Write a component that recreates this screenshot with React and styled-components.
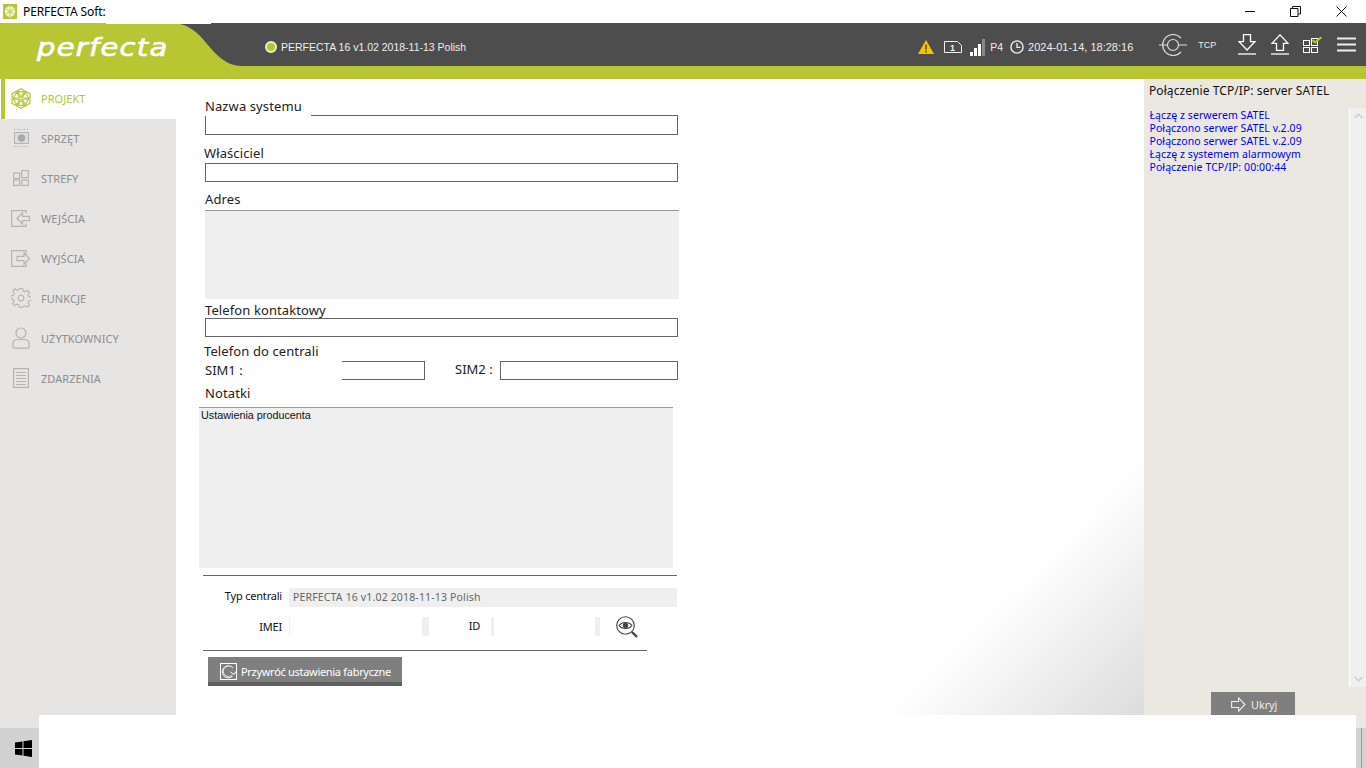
import React from 'react';
import styled, { createGlobalStyle } from 'styled-components';

const Global = createGlobalStyle`
  html, body { margin: 0; padding: 0; background: #fff; overflow: hidden; }
  * { box-sizing: border-box; }
`;
const GREEN = '#b7c632';
const DARK = '#4d4d4d';
const SIDE = '#e6e5e3';
const BEIGE = '#ebe8e1';
const UI = '"Noto Sans", "Open Sans", sans-serif';
const ARIAL = '"Liberation Sans", Arial, sans-serif';

const Page = styled.div`width:1366px;height:768px;display:flex;flex-direction:column;overflow:hidden;font-family:${UI};`;
const TitleBar = styled.div`height:23px;display:flex;align-items:center;position:relative;background:#fff;padding-left:3px;
  &::after{content:"";position:absolute;left:106px;top:23px;width:105px;height:1px;background:#fff;z-index:2;}`;
const AppTitle = styled.span`font-size:12px;color:#000;margin-left:6px;letter-spacing:-.1px;`;
const WinButtons = styled.div`margin-left:auto;display:flex;align-items:center;padding-right:19px;`;
const WinBtn = styled.svg`width:11px;height:11px;margin-left:${p => p.$gap}px;display:block;`;

const Header = styled.header`height:43px;background:${DARK};display:flex;align-items:stretch;color:#fff;font-family:${ARIAL};`;
const Brand = styled.div`width:172px;background:${GREEN};display:flex;align-items:center;padding:5px 0 0 37px;`;
const Logo = styled.span`font:italic 400 25px "DejaVu Sans",sans-serif;-webkit-text-stroke:.7px #fff;color:#fff;letter-spacing:1.1px;line-height:1;display:inline-block;transform:scaleX(1.16);transform-origin:left center;`;
const Curve = styled.svg`width:70px;height:43px;display:block;flex:none;`;
const Strip = styled.div`display:flex;align-items:center;flex:1;`;
const StatusGroup = styled.div`display:flex;align-items:center;padding-top:5px;`;
const ToolGroup = styled.div`display:flex;align-items:center;`;
const Dot = styled.span`width:12px;height:12px;border-radius:50%;background:${GREEN};border:2px solid #e9ecd0;margin-left:23px;flex:none;`;
const HeadText = styled.span`font-size:${p => p.$size || 11}px;color:#eee;margin-left:${p => p.$gap || 0}px;white-space:nowrap;`;
const HeadIcon = styled.svg`display:block;flex:none;margin-left:${p => p.$gap || 0}px;`;
const Stripe = styled.div`height:13px;background:${GREEN};`;

const Body = styled.div`height:636px;display:flex;`;
const Sidebar = styled.nav`width:176px;background:${SIDE};flex:none;`;
const NavItem = styled.div`height:40px;display:flex;align-items:center;background:${p => p.$active ? '#fff' : 'transparent'};
  color:${p => p.$active ? GREEN : '#8d8d8d'};font-size:11px;padding-left:${p => p.$active ? 0 : 5}px;padding-bottom:2px;letter-spacing:.05px;`;
const NavBar = styled.span`width:5px;height:40px;flex:none;border-left:1px solid #fff;background:${GREEN};margin-bottom:-2px;`;
const NavIconBox = styled.span`width:36px;display:flex;justify-content:center;flex:none;padding-right:5px;padding-left:1px;`;

const Main = styled.main`flex:1;padding:19px 0 0 29px;background:#fff linear-gradient(135deg,#fff 50%,#dcdcdc 100%) no-repeat right bottom / 260px 260px;`;
const Form = styled.div`width:474px;display:flex;flex-direction:column;`;
const Label = styled.label`font-size:13px;line-height:17px;height:17px;color:#222;letter-spacing:.1px;margin-top:${p => p.$top || 0}px;margin-left:${p => p.$left || 0}px;white-space:nowrap;`;
const NameLabel = styled(Label)`width:106px;height:18px;background:#fff;position:relative;z-index:1;margin-bottom:-1px;`;
const Input = styled.div`height:${p => p.$h || 19}px;width:473px;background:#fff;border:1.5px solid #666;margin-top:${p => p.$top || 0}px;`;
const Area = styled.div`height:${p => p.$h}px;width:474px;background:#efefef;border-top:1px solid #999;margin-top:${p => p.$top || 0}px;margin-left:${p => p.$left || 0}px;
  font:10.8px/14px "Liberation Sans",Arial,sans-serif;color:#111;padding:0 2px;`;
const SimRow = styled.div`display:flex;align-items:center;height:19px;margin-top:1px;font-size:13px;color:#222;`;
const SimLabel = styled.span`width:${p => p.$w}px;flex:none;margin-left:${p => p.$left || 0}px;margin-top:-${p => p.$up}px;`;
const SimInput = styled.div`height:19px;width:${p => p.$w}px;border:1.5px solid #666;${p => p.$open && 'border-left:0;'}`;
const Rule = styled.div`height:1px;background:#666;width:${p => p.$w}px;margin-left:-2px;margin-top:${p => p.$top}px;`;
const InfoRow = styled.div`display:flex;align-items:center;height:${p => p.$h}px;margin-top:${p => p.$top}px;margin-left:-2px;`;
const InfoLabel = styled.span`font-size:11px;color:#111;width:${p => p.$w}px;text-align:right;flex:none;letter-spacing:-.2px;margin-top:-${p => p.$up || 0}px;`;
const TypeValue = styled.div`margin-left:7px;width:388px;height:19px;background:#efefef;color:#666;font-size:10.5px;line-height:19px;padding-left:4px;letter-spacing:.16px;white-space:nowrap;`;
const Sliver = styled.div`width:${p => p.$w}px;height:19px;flex:none;background:#efefef;margin-left:${p => p.$gap}px;`;
const ResetBtn = styled.button`margin:6px 0 0 3px;width:194px;height:29px;background:#7f7f7f;border:0;border-bottom:4px solid #5f5f5f;color:#fff;
  font:11px ${UI};display:flex;align-items:center;padding:3px 0 0 12px;letter-spacing:-.3px;white-space:nowrap;`;

const Panel = styled.aside`width:222px;flex:none;background:${BEIGE};display:flex;flex-direction:column;`;
const PanelTitle = styled.div`height:29px;font-size:12px;color:#111;padding:4px 0 0 5px;line-height:16px;letter-spacing:.08px;white-space:nowrap;`;
const LogRow = styled.div`height:579px;display:flex;`;
const Log = styled.div`flex:1;padding:1px 0 0 5.5px;font-size:10.5px;line-height:13px;color:#0000f0;letter-spacing:.08px;white-space:nowrap;`;
const Scroll = styled.div`width:17px;border-left:1px solid #fff;background:#f0f0f0;display:flex;flex-direction:column;justify-content:space-between;align-items:center;padding:5px 0 5px;`;
const Hide = styled.button`margin:5px 0 0 67px;width:84px;height:23px;background:#7f7f7f;border:0;color:#eee;font:10.8px ${UI};display:flex;align-items:center;padding:2px 0 0 20px;`;

const Bottom = styled.div`flex:1;display:flex;`;
const Corner = styled.div`width:${p => p.$w}px;flex:none;display:flex;flex-direction:column;`;
const CornerTop = styled.div`height:13px;background:${p => p.$bg};`;
const CornerFill = styled.div`flex:1;background:#d2d2d2;display:flex;align-items:center;justify-content:${p => p.$line ? 'flex-start' : 'center'};padding-left:${p => p.$line ? 5 : 8}px;`;
const Line = styled.span`width:1px;height:100%;background:#999;`;
const Blank = styled.div`flex:1;background:#fff;`;

const ico = { fill: 'none', stroke: '#b4b4b4', strokeWidth: 1.2 };

function Flake({ c = GREEN, w = 1.2, size = 20 }) {
  const sectors = [0, 60, 120, 180, 240, 300];
  return (
    <svg width={size} height={size + 1} viewBox="0 0 20 21" style={{ display: 'block' }}>
      <polygon points="10,.7 18.9,5.7 18.9,15.3 10,20.3 1.1,15.3 1.1,5.7" fill="none" stroke={c} strokeWidth={w} />
      {sectors.map(a => (
        <g key={a} transform={`rotate(${a} 10 10.5)`}>
          <polygon points="10,9 6.6,3.6 13.4,3.6" fill="none" stroke={c} strokeWidth={w} />
        </g>
      ))}
    </svg>
  );
}

const navIcons = {
  chip: (
    <svg width="19" height="20" viewBox="0 0 19 20">
      <rect x="2.5" y="4.5" width="14" height="11" fill="#ddd" stroke="#b4b4b4" />
      <circle cx="9.5" cy="10" r="3.7" fill="#a9a9a9" />
      <path d="M2 1.5h15M2 18.5h15" stroke="#aaa" strokeWidth="1.2" strokeDasharray="1.2 2" />
    </svg>
  ),
  zones: (
    <svg width="16" height="16" viewBox="0 0 16 16" {...ico}>
      <rect x=".6" y="3" width="6" height="5.5" /><rect x="8.8" y=".6" width="6.5" height="7" />
      <rect x=".6" y="10" width="6" height="5.4" /><rect x="8.8" y="10" width="6.5" height="5.4" />
    </svg>
  ),
  input: (
    <svg width="20" height="17" viewBox="0 0 20 17" {...ico}>
      <path d="M15 3.500V.6H.6v15.8H15V13.500" /><path d="M6 8.500 11.500 2.800v3.500h7v4.400h-7v3.500z" />
    </svg>
  ),
  output: (
    <svg width="20" height="17" viewBox="0 0 20 17" {...ico}>
      <path d="M15 3.500V.6H.6v15.8H15V13.500" /><path d="M18.500 8.500 13 2.800v3.500H6v4.400h7v3.500z" />
    </svg>
  ),
  gear: (
    <svg width="20" height="20" viewBox="0 0 24 24" fill="none" stroke="#b4b4b4" strokeWidth="1.3">
      <circle cx="12" cy="12" r="3.4" />
      <path d="M10 1h4l.6 3.2 2 .9L19.400 3.200l2.900 2.900-1.900 2.700.8 2 3.300.6v4l-3.300.6-.8 2 1.900 2.700-2.900 2.900-2.700-1.900-2 .8L14 24h-4l-.6-3.300-2-.8-2.700 1.900-2.900-2.900 1.900-2.700-.8-2L0 13.600v-4l3.200-.6.8-2L2.100 4.300 5 1.400l2.700 1.900 2-.9z" transform="translate(0 -.5)" />
    </svg>
  ),
  user: (
    <svg width="18" height="22" viewBox="0 0 18 22" {...ico}>
      <circle cx="9" cy="6" r="5" />
      <path d="M1 20v-3c0-3 2-4.500 4.500-4.500h7c2.500 0 4.500 1.500 4.500 4.500v3c0 .7-.5 1.200-1.200 1.200H2.200C1.500 21.200 1 20.700 1 20z" />
    </svg>
  ),
  log: (
    <svg width="16" height="20" viewBox="0 0 16 20" {...ico}>
      <rect x=".6" y=".6" width="14.800" height="18.800" />
      <path d="M3 4.500h10M3 7.500h10M3 10.500h10M3 13.500h10M3 16.500h10" strokeWidth="1" />
    </svg>
  ),
};

const nav = [
  ['PROJEKT', <Flake key="f" />, true],
  ['SPRZĘT', navIcons.chip],
  ['STREFY', navIcons.zones],
  ['WEJŚCIA', navIcons.input],
  ['WYJŚCIA', navIcons.output],
  ['FUNKCJE', navIcons.gear],
  ['UŻYTKOWNICY', navIcons.user],
  ['ZDARZENIA', navIcons.log],
];

export default function App() {
  return (
    <Page>
      <Global />
      <TitleBar>
        <svg width="14" height="15" viewBox="0 0 14 15" style={{ display: 'block' }}>
          <rect width="14" height="15" fill="#b7c632" />
          <polygon points="7,1.500 12,4.400 12,10.600 7,13.500 2,10.600 2,4.400" fill="#f4f6dc" />
          <path d="M7 1.500v12M2 4.400l10 6.200M12 4.400 2 10.600" stroke="#b7c632" strokeWidth=".9" />
        </svg>
        <AppTitle>PERFECTA Soft:</AppTitle>
        <WinButtons>
          <WinBtn viewBox="0 0 11 11" $gap={0}><path d="M0 5.500h10" stroke="#111" /></WinBtn>
          <WinBtn viewBox="0 0 11 11" $gap={34}><path d="M.5 2.500h7.500v8H.5zM2.500 2.500V.5h8v7.500H8" fill="none" stroke="#111" /></WinBtn>
          <WinBtn viewBox="0 0 11 11" $gap={35}><path d="M.5.500l10 10M10.500.5l-10 10" stroke="#111" /></WinBtn>
        </WinButtons>
      </TitleBar>
      <Header>
        <Brand><Logo>perfecta</Logo></Brand>
        <Curve viewBox="0 0 70 43">
          <path d="M0 0C12 0 19 5 26 11 37 21 48 43 70 43H0z" fill={GREEN} />
        </Curve>
        <Strip>
          <StatusGroup>
            <Dot />
            <HeadText $gap={4} $size={10.5}>PERFECTA 16 v1.02 2018-11-13 Polish</HeadText>
            <HeadIcon $gap={452} width="16" height="14" viewBox="0 0 16 14">
              <path d="M8 0 16 14H0z" fill="#f5c400" /><path d="M8 4.500v5M8 10.500v2" stroke="#4d4d4d" strokeWidth="1.600" />
            </HeadIcon>
            <HeadIcon $gap={10} width="18" height="12" viewBox="0 0 18 12">
              <path d="M.5.500h13l4 4v7H.5z" fill="none" stroke="#eee" />
              <text x="6" y="9.500" fontSize="9" fontWeight="700" fill="#eee" fontFamily={ARIAL}>1</text>
            </HeadIcon>
            <HeadIcon $gap={8} width="15" height="17" viewBox="0 0 15 17">
              <rect x="0" y="13" width="3" height="4" fill="#fff" /><rect x="4" y="9" width="3" height="8" fill="#fff" />
              <rect x="8" y="5" width="3" height="12" fill="#fff" /><rect x="12" y="0" width="3" height="17" fill="#888" />
            </HeadIcon>
            <HeadText $gap={5} $size={10.5}>P4</HeadText>
            <HeadIcon $gap={7} width="14" height="14" viewBox="0 0 14 14">
              <circle cx="7" cy="7" r="6.100" fill="none" stroke="#eee" strokeWidth="1.400" /><path d="M7 3v4.300h3.500" fill="none" stroke="#eee" strokeWidth="1.300" />
            </HeadIcon>
            <HeadText $gap={4}>2024-01-14, 18:28:16</HeadText>
          </StatusGroup>
          <ToolGroup>
            <HeadIcon $gap={26} width="28" height="22" viewBox="0 0 28 22" fill="none" stroke="#ddd" strokeWidth="1.200">
              <path d="M0 11h8M20 11h8" /><circle cx="14" cy="11" r="5.500" /><path d="M22 4A10.500 10.500 0 1 0 22 18" />
            </HeadIcon>
            <HeadText $gap={11} $size={9}>TCP</HeadText>
            <HeadIcon $gap={22} width="18" height="21" viewBox="0 0 18 21" fill="none" stroke="#fff" strokeWidth="1.300">
              <path d="M5.500.7h7v7H17L9 16 1 7.700h4.500z" /><path d="M0 20h18" />
            </HeadIcon>
            <HeadIcon $gap={15} width="18" height="21" viewBox="0 0 18 21" fill="none" stroke="#fff" strokeWidth="1.300">
              <path d="M5.500 16.300v-7H1L9 .9l8 8.400h-4.500v7z" /><path d="M0 20h18" />
            </HeadIcon>
            <HeadIcon $gap={14} width="19" height="16" viewBox="0 0 19 16">
              <g fill="none" stroke="#fff"><rect x=".5" y="3.500" width="6" height="5" /><rect x="8.500" y="1.500" width="6" height="7" /><rect x=".5" y="10.500" width="6" height="5" /><rect x="8.500" y="10.500" width="6" height="5" /></g>
              <path d="M9.500 3l2.500 2.500L18.500 0" fill="none" stroke={GREEN} strokeWidth="2" />
            </HeadIcon>
            <HeadIcon $gap={15} width="19" height="15" viewBox="0 0 19 15" fill="none" stroke="#eee" strokeWidth="2">
              <path d="M0 1.500h19M0 7.500h19M0 13.500h19" />
            </HeadIcon>
          </ToolGroup>
        </Strip>
      </Header>
      <Stripe />
      <Body>
        <Sidebar>
          {nav.map(([t, icon, active]) => (
            <NavItem key={t} $active={active}>
              {active && <NavBar />}
              <NavIconBox>{icon}</NavIconBox>
              {t}
            </NavItem>
          ))}
        </Sidebar>
        <Main>
          <Form>
            <NameLabel>Nazwa systemu</NameLabel>
            <Input $h={20} />
            <Label $top={10} $left={-1}>Właściciel</Label>
            <Input $top={1} />
            <Label $top={9}>Adres</Label>
            <Area $h={89} $top={2} />
            <Label $top={3}>Telefon kontaktowy</Label>
            <Input $top={-1} />
            <Label $top={6} $left={-1}>Telefon do centrali</Label>
            <SimRow>
              <SimLabel $w={137} $up={2}>SIM1 :</SimLabel>
              <SimInput $w={83} $open />
              <SimLabel $w={45} $left={30} $up={4}>SIM2 :</SimLabel>
              <SimInput $w={178} />
            </SimRow>
            <Label $top={5}>Notatki</Label>
            <Area $h={161} $top={5} $left={-6}>Ustawienia producenta</Area>
            <Rule $w={474} $top={7} />
            <InfoRow $h={19} $top={12}>
              <InfoLabel $w={79} $up={4}>Typ centrali</InfoLabel>
              <TypeValue>PERFECTA 16 v1.02 2018-11-13 Polish</TypeValue>
            </InfoRow>
            <InfoRow $h={19} $top={10}>
              <InfoLabel $w={79}>IMEI</InfoLabel>
              <Sliver $w={1} $gap={7} />
              <Sliver $w={7} $gap={132} />
              <InfoLabel $w={51} $up={2}>ID</InfoLabel>
              <Sliver $w={3} $gap={11} />
              <Sliver $w={5} $gap={101} />
              <HeadIcon $gap={16} width="22" height="22" viewBox="0 0 22 22" fill="none" stroke="#444">
                <circle cx="9.500" cy="9.500" r="8.800" strokeWidth="1.100" />
                <path d="M3 9.500c3-4 10-4 13 0-3 4-10 4-13 0z" strokeWidth="1.100" />
                <circle cx="9.500" cy="9.500" r="2.300" fill="#444" />
                <path d="M16 16l5 5" strokeWidth="2.400" />
              </HeadIcon>
            </InfoRow>
            <Rule $w={444} $top={14} />
            <ResetBtn>
              <svg width="17" height="17" viewBox="0 0 17 17" fill="none" stroke="#fff" style={{ marginRight: 4, flex: 'none' }}>
                <rect x=".5" y=".5" width="16" height="16" />
                <path d="M12.500 13.200A6 6 0 1 1 13 5" strokeWidth="1" /><path d="M8.500 3A5.300 5.300 0 1 0 11.800 12.500" strokeWidth=".7" /><path d="M10.500 9l3.500 2.500L16 8.500" strokeWidth="1" />
              </svg>
              Przywróć ustawienia fabryczne
            </ResetBtn>
          </Form>
        </Main>
        <Panel>
          <PanelTitle>Połączenie TCP/IP: server SATEL</PanelTitle>
          <LogRow>
            <Log>
              <div>Łączę z serwerem SATEL</div>
              <div>Połączono serwer SATEL v.2.09</div>
              <div>Połączono serwer SATEL v.2.09</div>
              <div>Łączę z systemem alarmowym</div>
              <div>Połączenie TCP/IP: 00:00:44</div>
            </Log>
            <Scroll>
              <svg width="9" height="6" viewBox="0 0 9 6"><path d="M.7 5 4.500 1.300 8.300 5" fill="none" stroke="#ccc" strokeWidth="1.500" /></svg>
              <svg width="9" height="6" viewBox="0 0 9 6"><path d="M.7 1 4.500 4.700 8.300 1" fill="none" stroke="#ccc" strokeWidth="1.500" /></svg>
            </Scroll>
          </LogRow>
          <Hide>
            <svg width="15" height="15" viewBox="0 0 15 15" fill="none" stroke="#eee" strokeWidth="1.100" style={{ marginRight: 5, flex: 'none' }}>
              <path d="M.6 4.500h7V.9L14 7.500l-6.400 6.600V10.500h-7z" />
            </svg>
            Ukryj
          </Hide>
        </Panel>
      </Body>
      <Bottom>
        <Corner $w={39}>
          <CornerTop $bg={SIDE} />
          <CornerFill>
            <svg width="17" height="17" viewBox="0 0 17 17"><path d="M0 2.500 7.500 1.400v6.500H0zM8.500 1.300 17 0v7.900H8.500zM0 9h7.500v6.500L0 14.500zM8.500 9H17v8l-8.500-1.300z" fill="#000" /></svg>
          </CornerFill>
        </Corner>
        <Blank />
        <Corner $w={10}>
          <CornerTop $bg={BEIGE} />
          <CornerFill $line><Line /></CornerFill>
        </Corner>
      </Bottom>
    </Page>
  );
}
